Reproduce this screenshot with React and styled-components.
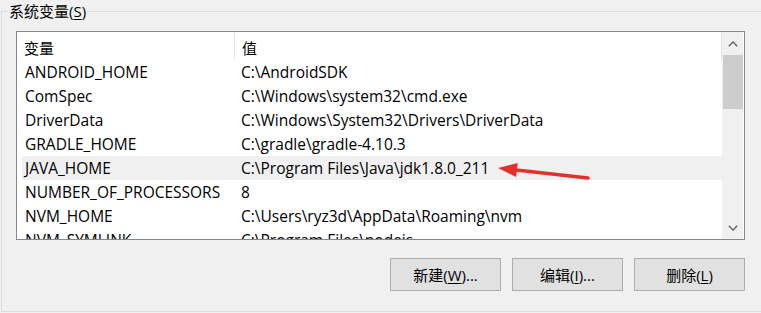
import React from "react";
import styled, { createGlobalStyle } from "styled-components";

const GlobalStyle = createGlobalStyle`
  html, body {
    margin: 0;
    padding: 0;
    background: #f0f0f0;
    overflow: hidden;
  }
  body {
    font-family: "Open Sans", "Noto Sans CJK SC", sans-serif;
    font-size: 15px;
    color: #000;
  }
`;

const Page = styled.div`
  position: relative;
  width: 761px;
  height: 313px;
  overflow: hidden;
`;

const Group = styled.fieldset`
  margin: 0 0 0 1px;
  padding: 0;
  border: 1px solid #dcdcdc;
  width: 790px;
  box-sizing: border-box;
  min-width: 0;
`;

const Legend = styled.legend`
  margin-left: 6px;
  padding: 0 1px;
  font-size: 15px;
  line-height: 22px;
`;

const Content = styled.div`
  width: 729px;
  padding: 9px 0 20px 14px;
  display: flex;
  flex-direction: column;
  gap: 18px;
`;

const ListBox = styled.div`
  height: 209px;
  box-sizing: border-box;
  border: 1px solid #828790;
  background: #fff;
  display: flex;
  overflow: hidden;
`;

const ListArea = styled.div`
  flex: 1;
  min-width: 0;
  display: flex;
  flex-direction: column;
  overflow: hidden;
`;

const Header = styled.div`
  display: grid;
  grid-template-columns: 218px 487px;
  height: 28px;
  flex-shrink: 0;
`;

const HeaderCell = styled.div`
  box-sizing: border-box;
  padding: 3px 0 0 7px;
  border-right: 1px solid #e5e5e5;
  display: flex;
  align-items: center;
  line-height: 20px;
`;

const Row = styled.div`
  display: grid;
  grid-template-columns: 212px 1fr;
  height: 24px;
  flex-shrink: 0;
  margin-left: 5px;
  align-items: center;
  font-size: 15.5px;
  line-height: 20px;
  background: ${(p) => (p.$selected ? "#f0f0f0" : "transparent")};
  white-space: nowrap;
`;

const NameCell = styled.div`
  padding-left: 3px;
`;

const ValueCell = styled.div`
  padding-left: 7px;
`;

const ScrollBar = styled.div`
  width: 21px;
  margin-right: 1px;
  background: #f0f0f0;
  display: flex;
  flex-direction: column;
  flex-shrink: 0;
`;

const ScrollButton = styled.div`
  height: ${(p) => p.$h}px;
  display: flex;
  align-items: center;
  justify-content: center;
  flex-shrink: 0;
`;

const Thumb = styled.div`
  height: 54px;
  margin-left: 1px;
  background: #cdcdcd;
  flex-shrink: 0;
`;

const Track = styled.div`
  flex: 1;
`;

const ButtonRow = styled.div`
  display: flex;
  justify-content: flex-end;
  gap: 11px;
`;

const Button = styled.button`
  width: 111px;
  height: 33px;
  box-sizing: border-box;
  border: 1px solid #adadad;
  background: #e1e1e1;
  color: #000;
  padding: 0;
  font-family: "Open Sans", "Noto Sans CJK SC", sans-serif;
  font-size: 15px;
`;

const U = styled.span`
  text-decoration: underline;
  text-underline-offset: 2px;
`;

const Overlay = styled.svg`
  position: absolute;
  left: 0;
  top: 0;
  pointer-events: none;
`;

const rows = [
  ["ANDROID_HOME", "C:\\AndroidSDK"],
  ["ComSpec", "C:\\Windows\\system32\\cmd.exe"],
  ["DriverData", "C:\\Windows\\System32\\Drivers\\DriverData"],
  ["GRADLE_HOME", "C:\\gradle\\gradle-4.10.3"],
  ["JAVA_HOME", "C:\\Program Files\\Java\\jdk1.8.0_211", true],
  ["NUMBER_OF_PROCESSORS", "8"],
  ["NVM_HOME", "C:\\Users\\ryz3d\\AppData\\Roaming\\nvm"],
  ["NVM_SYMLINK", "C:\\Program Files\\nodejs"],
];

const Chevron = ({ down }) => (
  <svg width="10" height="6" viewBox="0 0 10 6">
    <polyline
      points={down ? "0.8,0.8 5,5 9.2,0.8" : "0.8,5.2 5,1 9.2,5.2"}
      fill="none"
      stroke="#606060"
      strokeWidth="1.3"
    />
  </svg>
);

export default function App() {
  return (
    <Page>
      <GlobalStyle />
      <Group>
        <Legend>
          系统变量(<U>S</U>)
        </Legend>
        <Content>
          <ListBox>
            <ListArea>
              <Header>
                <HeaderCell>变量</HeaderCell>
                <HeaderCell>值</HeaderCell>
              </Header>
              {rows.map(([n, v, sel]) => (
                <Row key={n} $selected={sel}>
                  <NameCell>{n}</NameCell>
                  <ValueCell>{v}</ValueCell>
                </Row>
              ))}
            </ListArea>
            <ScrollBar>
              <ScrollButton $h={23}>
                <Chevron />
              </ScrollButton>
              <Thumb />
              <Track />
              <ScrollButton $h={22}>
                <Chevron down />
              </ScrollButton>
            </ScrollBar>
          </ListBox>
          <ButtonRow>
            <Button>
              新建(<U>W</U>)...
            </Button>
            <Button>
              编辑(<U>I</U>)...
            </Button>
            <Button>
              删除(<U>L</U>)
            </Button>
          </ButtonRow>
        </Content>
      </Group>
      <Overlay width="761" height="313" viewBox="0 0 761 313">
        <line
          x1="588"
          y1="178"
          x2="514"
          y2="169.8"
          stroke="#e62e2d"
          strokeWidth="3.5"
          strokeLinecap="round"
        />
        <polygon points="498,168 517.7,163.1 516.1,177.1" fill="#e62e2d" />
      </Overlay>
    </Page>
  );
}
